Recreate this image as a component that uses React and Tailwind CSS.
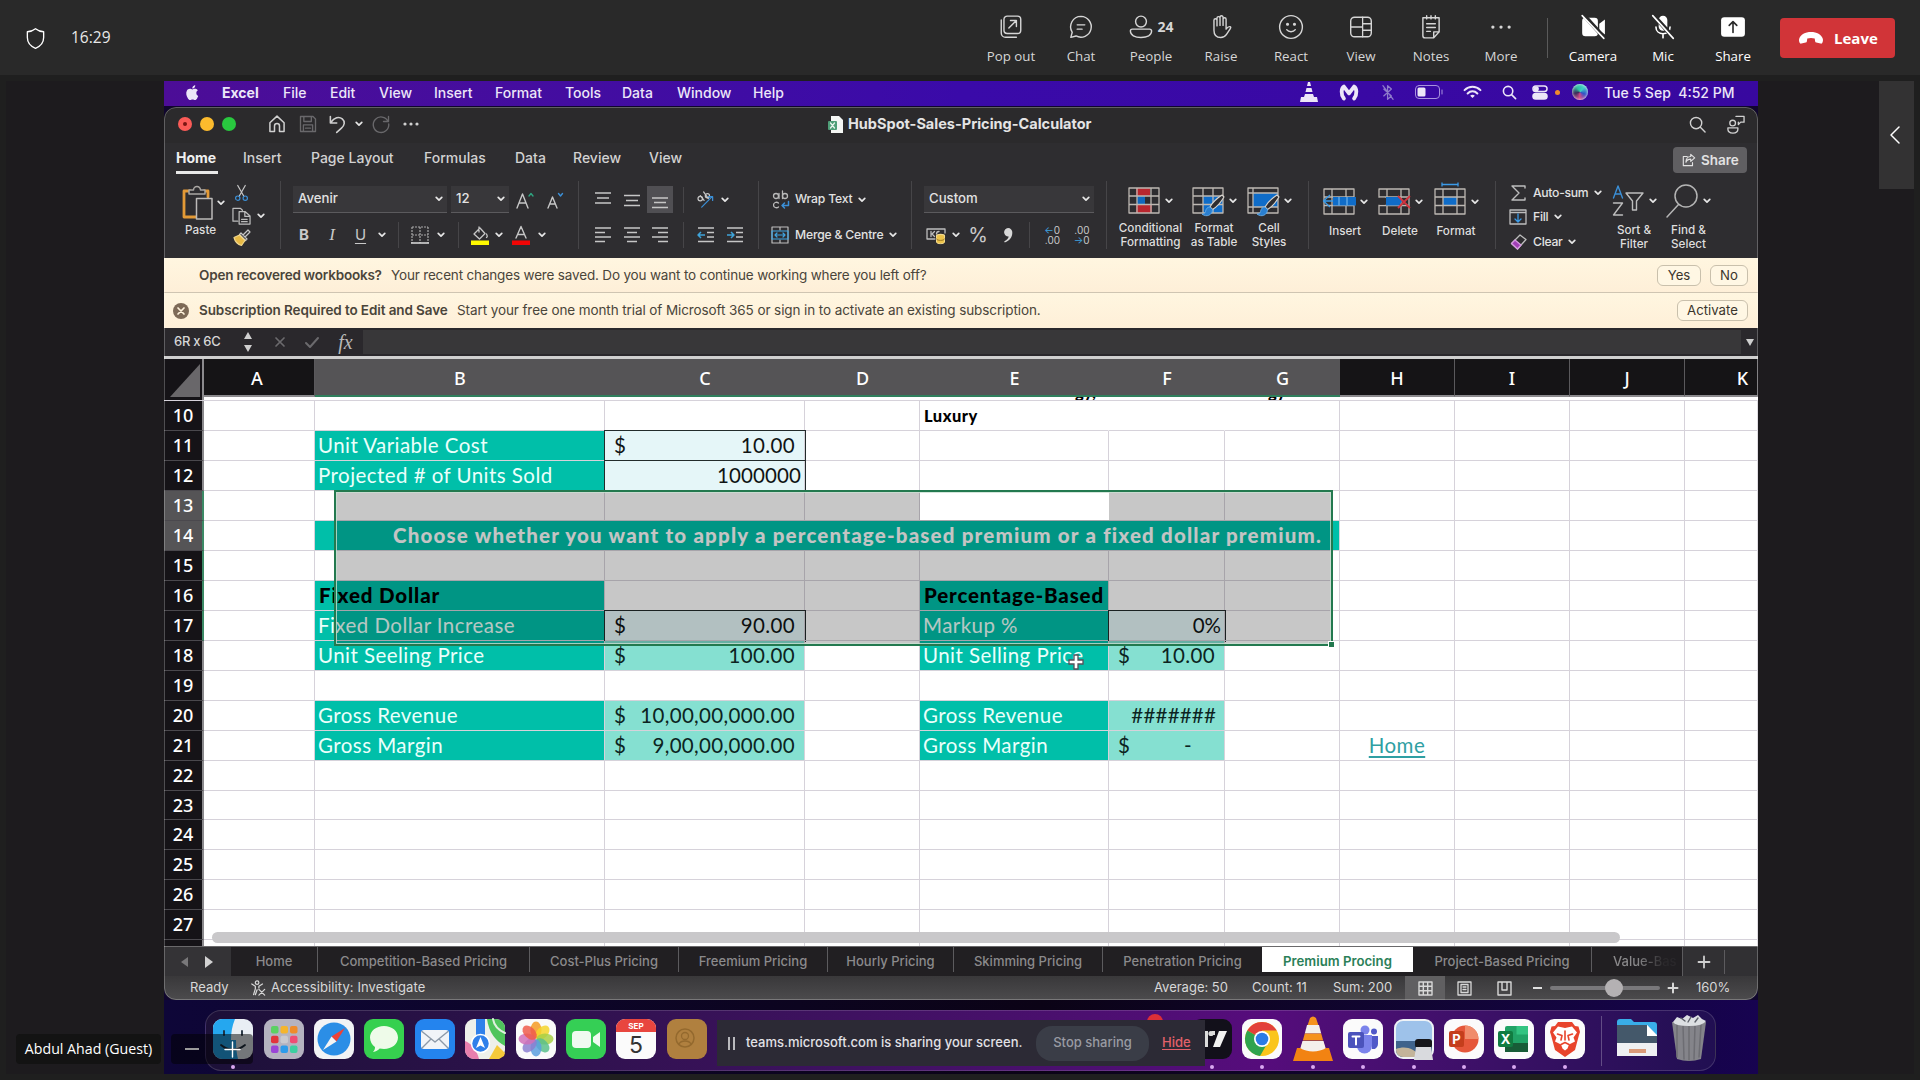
import React from "react";

/* ---------- small helpers ---------- */

function Svg({ className = "", vb = "0 0 24 24", children, ...rest }) {
  return (
    <svg
      className={"shrink-0 overflow-visible " + className}
      viewBox={vb}
      fill="none"
      stroke="currentColor"
      strokeWidth="1.5"
      strokeLinecap="round"
      strokeLinejoin="round"
      {...rest}
    >
      {children}
    </svg>
  );
}

function Caret({ className = "" }) {
  return (
    <Svg vb="0 0 8 6" className={"w-[8px] h-[6px] text-[#e6e6e6] " + className}>
      <path d="M1.2 1.4 4 4.2 6.8 1.4" strokeWidth="1.7" />
    </Svg>
  );
}

function Slot({ className = "", children }) {
  return <div className={"flex shrink-0 items-center justify-center " + className}>{children}</div>;
}

function Sep({ className = "w-[18px]" }) {
  return (
    <Slot className={className}>
      <div className="h-[26px] w-px bg-[#464548]" />
    </Slot>
  );
}

/* ---------- meeting toolbar ---------- */

const ic = "w-[26px] h-[26px]";

const meetingActions = [
  {
    label: "Pop out",
    icon: (
      <Svg className={ic} strokeWidth="1.3">
        <rect x="5.500" y="2" width="15.500" height="16" rx="3" />
        <path d="M3 5.500v12a4 4 0 0 0 4 4h10M10 13l6.500-6.500M11.500 6H17v5.500" />
      </Svg>
    ),
  },
  {
    label: "Chat",
    icon: (
      <Svg className={ic} strokeWidth="1.3">
        <path d="M12 2.2a9.6 9.6 0 1 1-4.6 18.1L2.6 21.6l1.3-4.7A9.6 9.6 0 0 1 12 2.2ZM8.5 10h7M8.5 14h4.5" />
      </Svg>
    ),
  },
  {
    label: "People",
    badge: "24",
    icon: (
      <Svg className={ic} strokeWidth="1.3">
        <circle cx="12" cy="7" r="5" />
        <path d="M4 14h16a1.800 1.800 0 0 1 1.800 1.800c0 3.700-4 5.900-9.800 5.900s-9.800-2.200-9.800-5.900A1.800 1.800 0 0 1 4 14Z" />
      </Svg>
    ),
  },
  {
    label: "Raise",
    icon: (
      <Svg className={ic} strokeWidth="1.3">
        <path d="M5.500 13V5.800a1.400 1.400 0 0 1 2.800 0V11 3.800a1.400 1.400 0 0 1 2.800 0V10.500 3a1.400 1.400 0 0 1 2.800 0v7.500V4.800a1.400 1.400 0 0 1 2.800 0V14c1-1.500 2-2.700 3.700-2.300.8.200.7 1 .2 1.700l-3.500 5.400c-1.200 1.800-2.800 2.900-5.300 2.900-4 0-6.300-2.600-6.300-6.700Z" />
      </Svg>
    ),
  },
  {
    label: "React",
    icon: (
      <Svg className={ic} strokeWidth="1.3">
        <circle cx="12" cy="12" r="10.500" />
        <path d="M8 14.500c1.900 2.600 6.100 2.600 8 0" />
        <circle cx="8.800" cy="9.500" r=".8" fill="currentColor" />
        <circle cx="15.200" cy="9.500" r=".8" fill="currentColor" />
      </Svg>
    ),
  },
  {
    label: "View",
    icon: (
      <Svg className={ic} strokeWidth="1.3">
        <rect x="2.500" y="3" width="19" height="18" rx="3.500" />
        <path d="M13.500 3v18M2.500 12h11M13.500 9h8M13.500 15h8" strokeWidth="1.200" />
      </Svg>
    ),
  },
  {
    label: "Notes",
    icon: (
      <Svg className={ic} strokeWidth="1.3">
        <path d="M4.500 3.500h15v13L14.500 22H6.500a2 2 0 0 1-2-2ZM14.500 22v-5.500h5M8 1.500v3M12 1.500v3M16 1.500v3M8 9h8M8 12.500h8M8 16h3.500" />
      </Svg>
    ),
  },
  {
    label: "More",
    icon: (
      <Svg className={ic} stroke="none" fill="currentColor">
        <circle cx="4.500" cy="12" r="1.500" />
        <circle cx="12" cy="12" r="1.500" />
        <circle cx="19.500" cy="12" r="1.500" />
      </Svg>
    ),
  },
];

const deviceActions = [
  {
    label: "Camera",
    icon: (
      <Svg className={ic}>
        <path d="M2 6.500A3 3 0 0 1 5 3.500h8.500a3 3 0 0 1 3 3v11a3 3 0 0 1-3 3H5a3 3 0 0 1-3-3ZM17.800 9 23 5v14l-5.200-4Z" fill="currentColor" stroke="none" />
        <path d="m3.500 1 19 21" stroke="#292929" strokeWidth="4" />
        <path d="m2 1.500 20 21" />
      </Svg>
    ),
  },
  {
    label: "Mic",
    icon: (
      <Svg className={ic}>
        <rect x="8" y="1.500" width="8" height="14" rx="4" fill="currentColor" stroke="none" />
        <path d="M5.500 12c0 4 3 6.200 6.500 6.200s6.500-2.200 6.500-6.200M12 18.500v3.500" />
        <path d="m3.500 1.500 18 20" stroke="#292929" strokeWidth="4" />
        <path d="m2.500 1.500 19 21" />
      </Svg>
    ),
  },
  {
    label: "Share",
    icon: (
      <Svg className={ic}>
        <rect x="1" y="3" width="22" height="18" rx="3" fill="currentColor" stroke="none" />
        <path d="M12 17V7.500M8.500 10.500 12 7l3.500 3.500" stroke="#292929" />
      </Svg>
    ),
  },
];

function Action({ item, bright }) {
  return (
    <div className={"flex w-[70px] shrink-0 flex-col items-center " + (bright ? "text-white" : "text-[#d6d6d6]")}>
      <div className="flex h-[30px] items-center justify-center">
        {item.icon}
        {item.badge && <span className="ml-[3px] text-[14px] leading-none font-bold">{item.badge}</span>}
      </div>
      <div className="mt-[5px] text-[13.300px] leading-[18px] whitespace-nowrap">{item.label}</div>
    </div>
  );
}

function MeetingBar() {
  return (
    <div className="flex h-[75px] shrink-0 items-start bg-[#292929] font-['Open_Sans','Noto_Sans',sans-serif]">
      <div className="flex h-[76px] w-[976px] items-center pl-[24px]">
        <Svg className="h-[23px] w-[23px] text-white" strokeWidth="1.400">
          <path d="M12 1.800c2.500 2 5 3 8.500 3.200V11c0 5.300-3 9-8.500 11.200C6.500 20 3.500 16.300 3.500 11V5C7 4.800 9.500 3.800 12 1.800Z" />
        </Svg>
        <span className="ml-[24px] text-[15.500px] text-[#e8e8e8]">16:29</span>
      </div>
      <div className="flex pt-[12px]">
        {meetingActions.map((a) => (
          <Action key={a.label} item={a} />
        ))}
      </div>
      <div className="mt-[18px] ml-[11px] h-[40px] w-px bg-[#5a5a5a]" />
      <div className="ml-[10px] flex pt-[12px]">
        {deviceActions.map((a) => (
          <Action key={a.label} item={a} bright />
        ))}
      </div>
      <button className="mt-[18px] ml-[12px] flex h-[40px] w-[115px] items-center rounded-[4px] bg-[#d13438] pl-[18px] text-white">
        <Svg vb="0 0 26 14" className="h-[14px] w-[26px]" stroke="none" fill="currentColor">
          <path d="M13 1c5.800 0 10.500 2.600 11.800 6.800.5 1.800-.1 3.500-.6 4.300-.4.500-1 .7-1.600.5l-4.300-1c-.7-.2-1.100-.7-1.200-1.400l-.4-2.700c-2.400-.8-5-.8-7.400 0l-.4 2.700c-.1.700-.5 1.200-1.200 1.400l-4.300 1c-.6.200-1.200 0-1.600-.5-.5-.8-1.100-2.500-.6-4.300C2.500 3.600 7.200 1 13 1Z" />
        </Svg>
        <span className="ml-[10px] text-[15px] font-bold">Leave</span>
      </button>
    </div>
  );
}

/* ---------- mac menu bar ---------- */

const menus = [
  ["Excel", "w-[61px] font-bold"],
  ["File", "w-[47px]"],
  ["Edit", "w-[49px]"],
  ["View", "w-[55px]"],
  ["Insert", "w-[61px]"],
  ["Format", "w-[70px]"],
  ["Tools", "w-[57px]"],
  ["Data", "w-[55px]"],
  ["Window", "w-[76px]"],
  ["Help", "w-[60px]"],
];

function MenuBar() {
  return (
    <div className="flex h-[25px] shrink-0 items-center bg-linear-to-r from-[#4c0d97] via-[#3a0aa9] to-[#38089f] pb-[3px] text-[14px] font-medium text-[#ece6f8]">
      <Svg vb="0 0 24 24" className="ml-[20px] h-[19px] w-[18px]" stroke="none" fill="currentColor">
        <path d="M16.400 12.800c0-2.500 2-3.700 2.100-3.800-1.200-1.700-3-1.900-3.600-2-1.500-.1-3 .9-3.800.9s-2-.9-3.200-.8c-1.700 0-3.200 1-4.100 2.400-1.700 3-.4 7.500 1.300 10 .8 1.200 1.800 2.500 3.100 2.500 1.300 0 1.700-.8 3.200-.8s1.900.8 3.200.8c1.400 0 2.200-1.200 3-2.400.900-1.400 1.300-2.700 1.300-2.800 0 0-2.500-1-2.500-4ZM14 5.400c.7-.8 1.100-2 1-3.100-1 0-2.200.7-2.900 1.500-.6.700-1.200 1.900-1 3 1.100.1 2.200-.6 2.900-1.400Z" />
      </Svg>
      <div className="ml-[20px] flex">
        {menus.map(([t, c]) => (
          <div key={t} className={"shrink-0 " + c}>
            {t}
          </div>
        ))}
      </div>
      <div className="ml-[476px] flex items-center">
        <Slot className="w-[40px]">
          <Svg vb="0 0 20 20" className="h-[20px] w-[20px]" stroke="none" fill="currentColor">
            <path d="M9 0h2l1 4H8ZM7.500 6h5l1 4h-7ZM6 12h8l1 3h3l1 5H1l1-5h3Z" />
          </Svg>
        </Slot>
        <Slot className="w-[40px]">
          <Svg vb="0 0 22 20" className="h-[17px] w-[20px]" strokeWidth="4.500">
            <path d="M5 17C1 12 2 5 5 3l6 8 6-8c3 2 4 9 0 14" />
          </Svg>
        </Slot>
        <Slot className="w-[38px] text-[#8f7ccb]">
          <Svg vb="0 0 14 20" className="h-[17px] w-[12px]">
            <path d="m2 6 9 8-4.500 4V2L11 6l-9 8M1 2l12 16" />
          </Svg>
        </Slot>
        <Slot className="w-[43px]">
          <Svg vb="0 0 28 14" className="h-[14px] w-[28px]" strokeWidth="1">
            <rect x=".5" y=".5" width="24" height="13" rx="3.500" stroke="#a893de" />
            <rect x="2.500" y="2.500" width="8" height="9" rx="1.500" fill="currentColor" stroke="none" />
            <path d="M27 5v4" stroke="#a893de" />
          </Svg>
        </Slot>
        <Slot className="w-[44px]">
          <Svg vb="0 0 20 15" className="h-[14px] w-[19px]" strokeWidth="2.200">
            <path d="M1.500 5.500c4.800-4.800 12.200-4.800 17 0M4.800 9c3-3 7.400-3 10.400 0" />
            <path d="m10 14-2.500-2.600c1.400-1.300 3.600-1.300 5 0Z" fill="currentColor" stroke="none" />
          </Svg>
        </Slot>
        <Slot className="w-[31px]">
          <Svg vb="0 0 16 16" className="h-[15px] w-[15px]" strokeWidth="1.700">
            <circle cx="6.500" cy="6.500" r="5" />
            <path d="m10.500 10.500 4 4" />
          </Svg>
        </Slot>
        <Slot className="w-[29px]">
          <Svg vb="0 0 17 16" className="h-[15px] w-[16px]" strokeWidth="1.600">
            <rect x="1" y="1" width="15" height="6" rx="3" />
            <circle cx="4.500" cy="4" r="2" fill="currentColor" />
            <rect x="1" y="9" width="15" height="6" rx="3" fill="currentColor" />
          </Svg>
        </Slot>
        <div className="ml-px h-[5px] w-[5px] rounded-full bg-[#f08a2c]" />
        <Slot className="w-[40px]">
          <div className="h-[16px] w-[16px] rounded-full bg-[conic-gradient(from_40deg,#3fd0c4,#3152c8,#d24a8a,#3a2a5a,#2fbfa0,#3fd0c4)] shadow-[inset_0_0_3px_#fff]" />
        </Slot>
        <span className="ml-[4px] whitespace-pre">Tue 5 Sep  4:52 PM</span>
      </div>
    </div>
  );
}

/* ---------- excel window chrome ---------- */

function TitleBar() {
  return (
    <div className="flex h-[36px] shrink-0 items-center bg-[#2b2a2c] pb-[2px] text-[#d0d0d0]">
      <div className="ml-[14px] flex gap-[8px]">
        <div className="flex h-[14px] w-[14px] items-center justify-center rounded-full bg-[#fb5b57]">
          <div className="h-[4px] w-[4px] rounded-full bg-[#7a1512]" />
        </div>
        <div className="h-[14px] w-[14px] rounded-full bg-[#fcbb2d]" />
        <div className="h-[14px] w-[14px] rounded-full bg-[#29c83f]" />
      </div>
      <Slot className="ml-[25px] w-[32px]">
        <Svg className="h-[20px] w-[20px]" strokeWidth="1.800">
          <path d="M3.500 10.500 12 2.500l8.500 8V21H15v-6.500a3 3 0 0 0-6 0V21H3.500Z" />
        </Svg>
      </Slot>
      <Slot className="w-[30px] text-[#69686b]">
        <Svg className="h-[20px] w-[20px]" strokeWidth="1.600">
          <path d="M3 3h15l3 3v15H3ZM7 3v6h9V3M6.500 21v-8h11v8M9 17h6" />
        </Svg>
      </Slot>
      <Slot className="w-[28px]">
        <Svg className="h-[19px] w-[19px]" strokeWidth="2">
          <path d="M3 2v8h8M3.500 9.500C8 3 14 1.500 18 5s3 8-1 11.500L11 22" />
        </Svg>
      </Slot>
      <Slot className="w-[15px]">
        <Caret />
      </Slot>
      <Slot className="w-[30px] text-[#69686b]">
        <Svg className="h-[20px] w-[20px]" strokeWidth="1.600">
          <path d="M20.500 9A9.300 9.300 0 1 0 21.300 12M21 3v6h-6" />
        </Svg>
      </Slot>
      <Slot className="w-[30px]">
        <Svg vb="0 0 16 4" className="h-[4px] w-[16px]" fill="currentColor" stroke="none">
          <circle cx="2" cy="2" r="1.600" />
          <circle cx="8" cy="2" r="1.600" />
          <circle cx="14" cy="2" r="1.600" />
        </Svg>
      </Slot>
      <div className="ml-[402px] flex w-[818px] items-center">
        <Svg vb="0 0 15 17" className="h-[17px] w-[15px]" stroke="none">
          <path d="M3 0h8l4 4v13H3Z" fill="#f4f6f4" />
          <rect y="5" width="9" height="9" rx="1" fill="#4f9e78" />
          <path d="m2.500 7 4 5M6.500 7l-4 5" stroke="#e6f2ea" strokeWidth="1.300" />
        </Svg>
        <span className="ml-[5px] text-[14.500px] font-bold text-[#e4e4e4]">HubSpot-Sales-Pricing-Calculator</span>
      </div>
      <Slot className="ml-[32px] w-[38px]">
        <Svg vb="0 0 18 18" className="h-[17px] w-[17px]">
          <circle cx="7.500" cy="7.500" r="6" />
          <path d="m12 12 5 5" />
        </Svg>
      </Slot>
      <Slot className="w-[38px]">
        <Svg vb="0 0 20 20" className="h-[19px] w-[19px]" strokeWidth="1.400">
          <circle cx="7" cy="8.500" r="3" />
          <path d="M2 13.500h10.500v1.500c0 2.500-2 4-5.200 4S2 17.500 2 15ZM10.500 1.500H19v6h-3.500L13 10V7.500" />
        </Svg>
      </Slot>
    </div>
  );
}

const ribbonTabs = [
  ["Insert", "w-[68px]"],
  ["Page Layout", "w-[113px]"],
  ["Formulas", "w-[91px]"],
  ["Data", "w-[58px]"],
  ["Review", "w-[76px]"],
  ["View", "w-[60px]"],
];

function RibbonTabs() {
  return (
    <div className="flex h-[37px] shrink-0 items-start bg-[#2e2d30] text-[14px] font-medium text-[#d2d2d2]">
      <div className="mt-[4px] ml-[12px] w-[67px]">
        <div className="w-[42px] border-b-[3px] border-[#e8e8e8] pb-[2px] leading-[22px] font-bold text-[#efefef]">Home</div>
      </div>
      <div className="mt-[4px] flex w-[1430px] leading-[22px]">
        {ribbonTabs.map(([t, c]) => (
          <div key={t} className={"shrink-0 " + c}>
            {t}
          </div>
        ))}
      </div>
      <div className="mt-[4px] flex h-[26px] w-[74px] shrink-0 items-center rounded-[4px] bg-[#605f62] pl-[9px] font-semibold text-[#e2e2e2]">
        <Svg vb="0 0 16 16" className="mr-[5px] h-[14px] w-[14px]" strokeWidth="1.300">
          <path d="M6 4H1.500v10.500H12V11M10 1.500l4.500 4-4.500 4V7C7 7 5.500 8 4.500 10.500 4.500 6.500 6.500 4 10 4Z" />
        </Svg>
        <span className="text-[13.500px]">Share</span>
      </div>
    </div>
  );
}

function Field({ className, children }) {
  return (
    <div className={"flex h-[27px] shrink-0 items-center justify-between border-b border-[#5b5a5d] bg-[#38373a] pr-[4px] pl-[5px] text-[13.200px] font-medium text-[#e2e2e2] " + className}>
      {children}
      <Caret />
    </div>
  );
}

function Lines({ d, className = "h-[18px] w-[18px]" }) {
  return (
    <Svg vb="0 0 18 18" className={className + " text-[#c6c6c6]"} strokeLinecap="butt">
      <path d={d} />
    </Svg>
  );
}

function TableIcon({ children }) {
  return (
    <Svg vb="0 0 32 28" className="h-[28px] w-[32px] text-[#bdb8b2]" strokeWidth="1.300" strokeLinecap="butt">
      {children}
    </Svg>
  );
}

const gridPath = "M1 1h30v25H1ZM1 9h30M1 17.500h30M9 1v25M23 1v25";

function BigButton({ className, icon, lines }) {
  return (
    <div className={"flex shrink-0 flex-col items-center " + className}>
      <div className="flex h-[38px] items-center gap-[5px]">
        {icon}
        <Caret />
      </div>
      <div className="mt-[3px] text-center text-[11.700px] leading-[14px] font-medium text-[#dedede]">
        {lines.map((l) => (
          <div key={l} className="whitespace-nowrap">
            {l}
          </div>
        ))}
      </div>
    </div>
  );
}

function Group({ className, children }) {
  return <div className={"flex h-[68px] shrink-0 border-r border-[#464548] " + className}>{children}</div>;
}

const brush = (
  <>
    <path d="M30 8c-6 4-10 8-12 12l2.500 2.500C25 20 29 15 32 10Z" fill="#2e2d30" stroke="#d8d4ce" strokeWidth="1.100" />
    <path d="M18 20c-3 0-4 2-4.500 4.500-.5 2-1.800 2.500-3.500 2.500 4 3.500 10.500 1.500 10.500-4.500Z" fill="#2a7fd0" stroke="#6ab2ee" strokeWidth=".8" />
  </>
);

function Ribbon() {
  return (
    <div className="flex h-[78px] shrink-0 items-start bg-[#2e2d30] pt-px">
      <Group className="w-[117px]">
        <div className="ml-[18px] w-[47px] pt-[5px]">
          <div className="flex items-center gap-[3px]">
            <Svg vb="0 0 32 34" className="h-[34px] w-[32px]" strokeWidth="1.500">
              <path d="M8 5H2v26h12M22 5h4v6" stroke="#e39a36" strokeWidth="2.800" />
              <path d="M7 8V4h4.500a3.500 3.500 0 0 1 7 0H23v4Z" stroke="#a9a6a3" fill="#2e2d30" />
              <path d="M14.500 12.500H30V33H14.500Z" stroke="#bcbab8" fill="#2e2d30" />
            </Svg>
            <Caret />
          </div>
          <div className="mt-[3px] ml-[3px] text-[11.700px] leading-[15px] font-medium text-[#dedede]">Paste</div>
        </div>
        <div className="flex flex-col">
          <div className="flex h-[26px] items-center pl-[5px]">
            <Svg vb="0 0 16 18" className="h-[18px] w-[15px]" strokeWidth="1.300">
              <path d="m4 1 6.500 11.500M12 1 5.500 12.500" stroke="#c6c6c6" />
              <circle cx="4" cy="14.500" r="2.300" stroke="#3b8fd6" />
              <circle cx="12" cy="14.500" r="2.300" stroke="#3b8fd6" />
            </Svg>
          </div>
          <div className="flex h-[23px] items-center gap-[6px] pl-[3px]">
            <Svg vb="0 0 20 18" className="h-[18px] w-[19px] text-[#bcbcbc]" strokeWidth="1.300">
              <path d="M6 14.500H1V1h8l2 2M7.500 4.500H14L19 9v8.500H7.500ZM13.500 4.500V9.500H19M10 12.500h6M10 15h6" />
            </Svg>
            <Caret />
          </div>
          <div className="flex h-[24px] items-center pl-[4px]">
            <Svg vb="0 0 18 17" className="h-[17px] w-[18px]" strokeWidth="1.200">
              <path d="m10 6 5-5 2 2-5 5M8 4l6 6-1.500 1.500-6-6Z" stroke="#c6c6c6" />
              <path d="M6.500 6 1 8.500c1 4 4 7 7.500 8l3.500-5Z" fill="#e7b945" stroke="#f0d68c" />
            </Svg>
          </div>
        </div>
      </Group>

      <Group className="w-[298px] flex-col">
        <div className="mt-[5px] flex items-center">
          <Field className="ml-[12px] w-[154px]">Avenir</Field>
          <Field className="ml-[4px] w-[58px]">12</Field>
          <Slot className="w-[31px]">
            <Svg vb="0 0 20 18" className="h-[18px] w-[20px] text-[#c6c6c6]" strokeWidth="1.400">
              <path d="M2 17 7.500 3 13 17M4 12h7" />
              <path d="m14 5 2-2.500L18 5" stroke="#2fa37f" />
            </Svg>
          </Slot>
          <Slot className="w-[29px]">
            <Svg vb="0 0 18 18" className="h-[18px] w-[18px] text-[#c6c6c6]" strokeWidth="1.400">
              <path d="M2 17 6.500 6 11 17M4 13h5" />
              <path d="m12.500 2.500 2 2.500 2-2.500" stroke="#3b8fd6" />
            </Svg>
          </Slot>
        </div>
        <div className="mt-[9px] flex h-[26px] items-center pl-[9px] text-[15px] text-[#c9c9c9]">
          <Slot className="w-[28px] font-bold">B</Slot>
          <Slot className="w-[28px] font-['Liberation_Serif',serif] text-[17px] italic">I</Slot>
          <Slot className="w-[29px] underline underline-offset-[3px]">U</Slot>
          <Slot className="w-[14px]">
            <Caret />
          </Slot>
          <Sep />
          <Slot className="w-[26px]">
            <Svg vb="0 0 18 18" className="h-[18px] w-[18px] text-[#a9a9a9]" strokeWidth="1.200" strokeLinecap="butt">
              <path d="M1 1h16M1 1v16M17 1v16M9 1v16M1 9h16" strokeDasharray="2 1" />
              <path d="M0 17h18" stroke="#dedede" strokeWidth="1.500" />
            </Svg>
          </Slot>
          <Slot className="w-[16px]">
            <Caret />
          </Slot>
          <Sep />
          <Slot className="w-[25px]">
            <Svg vb="0 0 18 19" className="h-[19px] w-[18px] text-[#c6c6c6]" strokeWidth="1.300">
              <path d="m3 8 6-6 5 5.500L8.500 13ZM8 1v5M15.500 8c1 2 1 3 0 3.500" />
              <path d="M0 14.500h18V19H0Z" fill="#fdf800" stroke="none" />
            </Svg>
          </Slot>
          <Slot className="w-[13px]">
            <Caret />
          </Slot>
          <Slot className="w-[32px]">
            <Svg vb="0 0 18 19" className="h-[19px] w-[18px] text-[#c6c6c6]" strokeWidth="1.400">
              <path d="M4 12 9 0.500 14 12M5.500 8.500h7" />
              <path d="M0 14.500h18V19H0Z" fill="#f20505" stroke="none" />
            </Svg>
          </Slot>
          <Slot className="w-[10px]">
            <Caret />
          </Slot>
        </div>
      </Group>

      <Group className="w-[180px] flex-col">
        <div className="mt-[5px] flex h-[27px] items-center pl-[9px]">
          <Slot className="w-[29px]">
            <Lines d="M1 2h16M3 7h12M1 12h16" />
          </Slot>
          <Slot className="w-[29px]">
            <Lines d="M1 4.500h16M3 9.500h12M1 14.500h16" />
          </Slot>
          <Slot className="w-[28px]">
            <Slot className="h-[27px] w-[26px] bg-[#504f53]">
              <Lines d="M1 7h16M3 11.500h12M1 16.500h16" />
            </Slot>
          </Slot>
          <Sep />
          <Slot className="w-[26px]">
            <Svg vb="0 0 20 20" className="h-[19px] w-[19px] text-[#c6c6c6]" strokeWidth="1.300">
              <circle cx="4.500" cy="9" r="2.400" />
              <path d="m4.500 6 4 5M8 2l5 7" />
              <circle cx="12" cy="6" r="2.200" />
              <path d="m6 18 11-11M13 7h4.500v4" stroke="#3b8fd6" />
            </Svg>
          </Slot>
          <Slot className="w-[14px]">
            <Caret />
          </Slot>
        </div>
        <div className="mt-[9px] flex h-[26px] items-center pl-[9px]">
          <Slot className="w-[29px]">
            <Lines d="M1 2h16M1 6.500h10M1 11h16M1 15.500h10" />
          </Slot>
          <Slot className="w-[29px]">
            <Lines d="M1 2h16M4 6.500h10M1 11h16M4 15.500h10" />
          </Slot>
          <Slot className="w-[28px]">
            <Lines d="M1 2h16M7 6.500h10M1 11h16M7 15.500h10" />
          </Slot>
          <Sep />
          <Slot className="w-[28px]">
            <Svg vb="0 0 18 18" className="h-[18px] w-[18px] text-[#c6c6c6]" strokeLinecap="butt">
              <path d="M1 2h16M10 6.500h7M10 11h7M1 15.500h16" />
              <path d="M1 9h7M4 6 1 9l3 3" stroke="#3fa3d8" />
            </Svg>
          </Slot>
          <Slot className="w-[29px]">
            <Svg vb="0 0 18 18" className="h-[18px] w-[18px] text-[#c6c6c6]" strokeLinecap="butt">
              <path d="M1 2h16M10 6.500h7M10 11h7M1 15.500h16" />
              <path d="M1 9h7M5 6l3 3-3 3" stroke="#3fa3d8" />
            </Svg>
          </Slot>
        </div>
      </Group>

      <Group className="w-[153px] flex-col text-[12.200px] font-medium text-[#e2e2e2]">
        <div className="mt-[5px] flex h-[27px] items-center pl-[13px]">
          <Svg vb="0 0 18 20" className="mr-[5px] h-[20px] w-[18px] text-[#b9b9b9]" strokeWidth="1.300">
            <circle cx="4" cy="6" r="2.500" />
            <path d="M7 3.500v5M10.500 1v7.500" />
            <circle cx="13" cy="6" r="2.500" />
            <path d="M6.500 13c-2-1.500-5-.5-5 2s3 3.500 5 2" />
            <path d="M16.500 11.500v4H10M12.500 13 10 15.500l2.500 2.500" stroke="#3b8fd6" strokeWidth="1.500" />
          </Svg>
          <span className="mr-[6px] tracking-[-0.200px] whitespace-nowrap">Wrap Text</span>
          <Caret />
        </div>
        <div className="mt-[9px] flex h-[26px] items-center pl-[12px]">
          <Svg vb="0 0 18 18" className="mr-[6px] h-[18px] w-[18px] text-[#bdbdbd]" strokeWidth="1.200">
            <path d="M1 1h16v16H1ZM9 1v3M9 14v3" />
            <path d="M1 5h16v8H1ZM4 9h10M6 7 4 9l2 2M12 7l2 2-2 2" stroke="#3fa3e0" />
          </Svg>
          <span className="mr-[6px] tracking-[-0.200px] whitespace-nowrap">Merge &amp; Centre</span>
          <Caret />
        </div>
      </Group>

      <Group className="w-[195px] flex-col">
        <Field className="mt-[5px] ml-[12px] w-[170px]">Custom</Field>
        <div className="mt-[9px] flex h-[26px] items-center pl-[12px] text-[#c9c9c9]">
          <Slot className="w-[24px]">
            <Svg vb="0 0 20 18" className="h-[18px] w-[20px] text-[#bdbdbd]" strokeWidth="1.300">
              <path d="M9 13H1V3h18v4M5 5.500v5M8.500 5.500 6 8l2.500 2.500M13 5.500c-2 0-2.500 1-2.500 2.500" />
              <ellipse cx="14.500" cy="10" rx="4" ry="1.700" fill="#edc34a" stroke="#f2d98d" />
              <path d="M10.500 10v6c0 2.200 8 2.200 8 0v-6" fill="#edc34a" stroke="#f2d98d" strokeWidth="1" />
              <path d="M10.500 13c0 2 8 2 8 0" stroke="#8a6a18" strokeWidth=".8" />
            </Svg>
          </Slot>
          <Slot className="w-[15px]">
            <Caret />
          </Slot>
          <Slot className="w-[30px] text-[20px]">%</Slot>
          <Slot className="w-[29px]">
            <Svg vb="0 0 10 16" className="h-[15px] w-[10px]" stroke="none" fill="#d8d8d8">
              <path d="M5 0a4.600 4.600 0 0 1 4.600 5C9.600 9.500 7 13.500 1.500 15.500l-.5-1.300c3-1.500 4.500-3.300 4.700-5.200A4.500 4.500 0 1 1 5 0Z" />
            </Svg>
          </Slot>
          <Sep className="w-[14px]" />
          <Slot className="w-[29px]">
            <div className="w-[19px] text-right text-[10px] leading-[10px]">
              <div>
                <span className="text-[#3fa3e0]">←</span>0
              </div>
              <div>.00</div>
            </div>
          </Slot>
          <Slot className="w-[30px]">
            <div className="w-[19px] text-right text-[10px] leading-[10px]">
              <div>.00</div>
              <div>
                <span className="text-[#3fa3e0]">→</span>0
              </div>
            </div>
          </Slot>
        </div>
      </Group>

      <Group className="w-[202px] pt-[2px] pl-[10px]">
        <BigButton
          className="w-[67px]"
          lines={["Conditional", "Formatting"]}
          icon={
            <TableIcon>
              <path d="M8 1h14v8H8ZM8 17.500h16V26H8Z" fill="#b8262e" stroke="none" />
              <path d="M9 9h8v8.500H9Z" fill="#1168bd" stroke="none" />
              <path d={gridPath} />
            </TableIcon>
          }
        />
        <BigButton
          className="w-[60px]"
          lines={["Format", "as Table"]}
          icon={
            <TableIcon>
              <path d="M11 9h20v17H11Z" fill="#0f6cc8" stroke="none" />
              <path d="M1 1h30v25H1ZM1 9h30M1 17.500h30M11 1v25M21 1v25" />
              {brush}
            </TableIcon>
          }
        />
        <BigButton
          className="w-[50px]"
          lines={["Cell", "Styles"]}
          icon={
            <TableIcon>
              <path d="M6 6h25v14H6Z" fill="#0f6cc8" stroke="none" />
              <path d="M1 1h30v25H1ZM1 6h30M6 1v25M1 20h30" />
              {brush}
            </TableIcon>
          }
        />
      </Group>

      <Group className="w-[187px] pt-[2px] pl-[9px]">
        <BigButton
          className="w-[54px]"
          lines={["Insert"]}
          icon={
            <TableIcon>
              <path d={gridPath} />
              <path d="M10 9h23v8.500H10Z" fill="#0f6cc8" stroke="none" />
              <path d="M16 9v8.500M24 9v8.500" stroke="#66aee8" />
              <path d="M10 13H1M7 7l-6.500 6L7 19" stroke="#3b9be8" />
            </TableIcon>
          }
        />
        <BigButton
          className="w-[56px]"
          lines={["Delete"]}
          icon={
            <TableIcon>
              <path d={gridPath} />
              <path d="M8 9h13l3 4-3 4.500H8Z" fill="#0f6cc8" stroke="none" />
              <path d="M0 9.700h7v7H0Z" fill="#2e2d30" stroke="none" />
              <path d="m20 8 12 12M32 8 20 20" stroke="#d23540" strokeWidth="1.800" />
            </TableIcon>
          }
        />
        <BigButton
          className="w-[56px]"
          lines={["Format"]}
          icon={
            <TableIcon>
              <path d="M9 9h14v8.500H9Z" fill="#0f6cc8" stroke="none" />
              <path d={gridPath} />
              <path d="M8-3.500h16M8-5.500v4M24-5.500v4" stroke="#3b9be8" />
            </TableIcon>
          }
        />
      </Group>

      <div className="flex pt-px pl-[11px]">
        <div className="w-[100px] text-[12.200px] font-medium text-[#e2e2e2]">
          <div className="flex h-[22px] items-center">
            <Slot className="w-[22px]">
              <Svg vb="0 0 15 16" className="h-[16px] w-[15px] text-[#bdbdbd]" strokeWidth="1.400">
                <path d="M14 3V1H1l7 7-7 7h13v-2" />
              </Svg>
            </Slot>
            <span className="mr-[6px] ml-[4px] tracking-[-0.300px] whitespace-nowrap">Auto-sum</span>
            <Caret />
          </div>
          <div className="flex h-[26px] items-center">
            <Slot className="w-[22px]">
              <Svg vb="0 0 18 16" className="h-[16px] w-[18px] text-[#bdbdbd]" strokeWidth="1.300">
                <path d="M1 1h16v14H1ZM1 3.500h16" />
                <path d="M9 5v7.500M6 10l3 3 3-3" stroke="#3b9be8" />
              </Svg>
            </Slot>
            <span className="mr-[6px] ml-[4px] tracking-[-0.300px]">Fill</span>
            <Caret />
          </div>
          <div className="flex h-[24px] items-center">
            <Slot className="w-[22px]">
              <Svg vb="0 0 17 16" className="h-[16px] w-[17px]" strokeWidth="1.300">
                <path d="M1.500 9.500 10 1l6 4.500L7.500 15Z" stroke="#bdbdbd" />
                <path d="M1.500 9.500 5 6l6 5-3.500 4Z" fill="#a33fb8" stroke="#d69be0" />
              </Svg>
            </Slot>
            <span className="mr-[6px] ml-[4px] tracking-[-0.300px]">Clear</span>
            <Caret />
          </div>
        </div>
        <BigButton
          className="w-[54px]"
          lines={["Sort &", "Filter"]}
          icon={
            <Svg vb="0 0 32 32" className="h-[32px] w-[32px] text-[#bdbdbd]" strokeWidth="1.400">
              <path d="M1.500 13 6 1l4.500 12M3 9h6" stroke="#3b8fd6" />
              <path d="M1.500 18h9l-9 12h9M14 8h17l-6.500 8v9h-4v-9Z" />
            </Svg>
          }
        />
        <BigButton
          className="w-[55px]"
          lines={["Find &", "Select"]}
          icon={
            <Svg vb="0 0 32 34" className="h-[34px] w-[32px] text-[#b4b4b4]" strokeWidth="1.500">
              <circle cx="20" cy="12" r="11" />
              <path d="M12.500 20.500 1 33" />
            </Svg>
          }
        />
      </div>
    </div>
  );
}

/* ---------- notices and formula bar ---------- */

function NoticeButton({ className, children }) {
  return (
    <div className={"flex h-[21px] shrink-0 items-center justify-center rounded-[6px] border border-[#c9c0ac] bg-[#fff7e4] text-[13.200px] text-[#3a352c] " + className}>
      {children}
    </div>
  );
}

function Notices() {
  return (
    <div className="shrink-0 text-[13.500px] text-[#4a453a]">
      <div className="flex h-[35px] items-center border-b border-[#cfc5b2] bg-linear-to-b from-[#fff6e0] to-[#feefd8] pt-px pl-[35px]">
        <span className="w-[192px] shrink-0 font-semibold tracking-[-0.200px] whitespace-nowrap">Open recovered workbooks?</span>
        <span className="w-[1266px] shrink-0 tracking-[-0.170px] whitespace-nowrap">Your recent changes were saved. Do you want to continue working where you left off?</span>
        <NoticeButton className="w-[44px]">Yes</NoticeButton>
        <NoticeButton className="ml-[9px] w-[38px]">No</NoticeButton>
      </div>
      <div className="flex h-[35px] items-center bg-linear-to-b from-[#fff6e0] to-[#feefd8] pl-[9px]">
        <Svg vb="0 0 16 16" className="mr-[10px] h-[16px] w-[16px]" stroke="none">
          <circle cx="8" cy="8" r="8" fill="#7d6a57" />
          <path d="m5 5 6 6M11 5l-6 6" stroke="#fff3dc" strokeWidth="1.700" />
        </Svg>
        <span className="w-[258px] shrink-0 font-semibold tracking-[-0.100px] whitespace-nowrap">Subscription Required to Edit and Save</span>
        <span className="w-[1220px] shrink-0 tracking-[-0.095px] whitespace-nowrap">Start your free one month trial of Microsoft 365 or sign in to activate an existing subscription.</span>
        <NoticeButton className="w-[71px]">Activate</NoticeButton>
      </div>
    </div>
  );
}

function FormulaBar() {
  return (
    <div className="flex h-[28px] shrink-0 items-center bg-[#2a282c] text-[#d6d6d6]">
      <span className="w-[80px] shrink-0 pl-[10px] text-[13px] font-medium tracking-[-0.300px]">6R x 6C</span>
      <Svg vb="0 0 8 20" className="h-[20px] w-[8px]" stroke="none" fill="#cfcfcf">
        <path d="m4 0 4 7H0ZM4 20l4-7H0Z" />
      </Svg>
      <Slot className="ml-[12px] w-[32px] text-[#6b6a6d]">
        <Svg vb="0 0 10 10" className="h-[10px] w-[10px]" strokeWidth="1.700">
          <path d="m1 1 8 8M9 1 1 9" />
        </Svg>
      </Slot>
      <Slot className="w-[32px] text-[#6b6a6d]">
        <Svg vb="0 0 14 11" className="h-[11px] w-[14px]" strokeWidth="2">
          <path d="m1 6 4 4 8-9" />
        </Svg>
      </Slot>
      <Slot className="w-[35px] font-['Liberation_Serif',serif] text-[20px] text-[#b8b8b8] italic">fx</Slot>
      <div className="h-[24px] w-[1378px] shrink-0 bg-[#383739]" />
      <Slot className="w-[17px]">
        <Svg vb="0 0 8 7" className="h-[7px] w-[8px]" stroke="none" fill="#cfcfcf">
          <path d="m4 7 4-7H0Z" />
        </Svg>
      </Slot>
    </div>
  );
}

/* ---------- sheet ---------- */

const cols = [
  ["A", "w-[111px]"],
  ["B", "w-[290px]", true],
  ["C", "w-[200px]", true],
  ["D", "w-[115px]", true],
  ["E", "w-[189px]", true],
  ["F", "w-[116px]", true],
  ["G", "w-[115px]", true],
  ["H", "w-[115px]"],
  ["I", "w-[115px]"],
  ["J", "w-[115px]"],
  ["K", "w-[73px]"],
];

const TEAL = "bg-[#00bfa9] border-[#00bfa9] text-[#eafffb] pl-[3px] tracking-[0.450px]";
const TEALB = "bg-[#00bfa9] border-[#00bfa9] text-black font-black pl-[4px] tracking-[0.850px]";
const LIGHT = "bg-[#85e0d1] border-[#85e0d1] text-[#0c2421]";
const INPUT = "bg-[#e5f6f8] text-[#101414] outline outline-1 outline-[#222b2b] -outline-offset-0";

function Money({ v, className = "pr-[9px]" }) {
  return (
    <div className={"flex flex-1 justify-between pl-[9px] tracking-[0.350px] " + className}>
      <span>$</span>
      <span className="whitespace-nowrap">{v}</span>
    </div>
  );
}

const right = (v, c) => <div className={"flex-1 text-right whitespace-nowrap " + c}>{v}</div>;

const sheet = {
  10: { E: ["border-r-transparent! pl-[4px] pt-[2px] font-black text-[16.500px] tracking-[0.500px] text-black", "Luxury"], F: ["border-r-transparent!", ""] },
  11: { B: [TEAL, "Unit Variable Cost"], C: [INPUT, <Money v="10.00" />] },
  12: { B: [TEAL, "Projected # of Units Sold"], C: [INPUT, right("1000000", "pr-[3px] tracking-[0.100px]")] },
  16: { B: [TEALB, "Fixed Dollar"], E: [TEALB, "Percentage-Based"] },
  17: {
    B: [TEAL, "Fixed Dollar Increase"],
    C: [INPUT, <Money v="90.00" />],
    E: [TEAL, "Markup %"],
    F: [INPUT, right("0%", "pr-[3px]")],
  },
  18: {
    B: [TEAL, "Unit Seeling Price"],
    C: [LIGHT, <Money v="100.00" />],
    E: [TEAL, "Unit Selling Price"],
    F: [LIGHT, <Money v="10.00" />],
  },
  20: {
    B: [TEAL, "Gross Revenue"],
    C: [LIGHT, <Money v="10,00,00,000.00" />],
    E: [TEAL, "Gross Revenue"],
    F: [LIGHT, right("#######", "pr-[8px] tracking-[0.200px]")],
  },
  21: {
    B: [TEAL, "Gross Margin"],
    C: [LIGHT, <Money v="9,00,00,000.00" />],
    E: [TEAL, "Gross Margin"],
    F: [LIGHT, <Money v="-" className="pr-[32px]" />],
    H: ["justify-center text-[#2f9fa3] underline underline-offset-[3px] tracking-[0.450px]", "Home"],
  },
};

const rows = [10, 11, 12, 13, 14, 15, 16, 17, 18, 19, 20, 21, 22, 23, 24, 25, 26, 27];

function Cell({ w, cls = "", children }) {
  return <div className={"flex h-full shrink-0 items-center border-r border-b border-[#d6d2da] whitespace-nowrap " + w + " " + cls}>{children}</div>;
}

function RowHead({ n }) {
  const sel = n === 13 || n === 14;
  const edge = n >= 13 && n <= 17;
  return (
    <div
      className={
        "flex h-full w-[40px] shrink-0 items-center justify-center border-r-2 border-b border-b-[#4a484d] font-['Noto_Sans',sans-serif] text-[18px] font-medium text-white " +
        (sel ? "bg-[#555456] " : "bg-[#151317] ") +
        (edge ? "border-r-[#3c8a66]" : "border-r-[#8b8a8d]")
      }
    >
      {n}
    </div>
  );
}

function Sheet() {
  return (
    <div className="relative flex h-[590px] shrink-0 flex-col overflow-hidden border-t-[3px] border-[#cfcfcf] bg-white">
      <div className="flex h-[38px] shrink-0">
        <div className="flex w-[40px] shrink-0 border-r-2 border-[#8b8a8d] bg-[#151317]">
          <Svg vb="0 0 38 38" className="h-[38px] w-[38px]" stroke="none">
            <path d="M36 5v33H6Z" fill="#69676a" />
          </Svg>
        </div>
        {cols.map(([n, w, on]) => (
          <div
            key={n}
            className={
              "flex shrink-0 items-center justify-center pt-[3px] font-['Noto_Sans',sans-serif] text-[18px] font-medium text-white " +
              w +
              (on ? " border-b-2 border-[#2f7f5c] bg-[#555456]" : " border-r border-b-2 border-[#5a595c] border-b-[#8b8a8d] bg-[#151416]") +
              (n === "K" ? " pl-[43px]" : "") +
              (n === "A" ? " pr-[4px]" : "")
            }
          >
            {n}
          </div>
        ))}
      </div>

      <div className="flex h-[4px] shrink-0 overflow-hidden border-b border-[#d6d2da] font-['Lato',sans-serif] text-[16.500px] leading-[20px] font-black text-black">
        <div className="h-full w-[40px] shrink-0 border-r-2 border-[#8b8a8d] bg-[#151317]" />
        <div className="-mt-[15px] w-[871px] shrink-0" />
        <div className="-mt-[15px] w-[193px] shrink-0">gy,</div>
        <div className="-mt-[15px] shrink-0">gy</div>
      </div>

      <div className="flex flex-col font-['Lato',sans-serif] text-[20.500px] text-black">
        {rows.map((n) => (
          <div key={n} className={"flex shrink-0 " + (n === 23 ? "h-[29px]" : "h-[30px]")}>
            <RowHead n={n} />
            {n === 14 ? (
              <>
                <Cell w="w-[111px]" />
                <Cell w="w-[1025px]" cls="border-[#00bfa9] bg-[#00bfa9] pl-[78px] font-black tracking-[1.190px] text-[#fbfbfb]">
                  Choose whether you want to apply a percentage-based premium or a fixed dollar premium.
                </Cell>
                {cols.slice(7).map(([c, w]) => (
                  <Cell key={c} w={w} />
                ))}
              </>
            ) : (
              cols.map(([c, w]) => {
                const d = (sheet[n] || {})[c];
                return (
                  <Cell key={c} w={w} cls={d ? d[0] : ""}>
                    {d ? d[1] : null}
                  </Cell>
                );
              })
            )}
          </div>
        ))}
        <div className="flex h-[6px] shrink-0">
          <div className="w-[40px] shrink-0 border-r-2 border-[#8b8a8d] bg-[#151317]" />
          {cols.map(([c, w]) => (
            <Cell key={c} w={w} cls="border-b-0" />
          ))}
        </div>
      </div>

      {/* selection over B13:G18 with the active cell left clear */}
      <div className="absolute top-[131px] left-[170px] flex h-[156px] w-[999px] flex-col border-2 border-[#23794f]">
        <div className="flex h-[28px] shrink-0">
          <div className="w-[584px] bg-black/22" />
          <div className="w-[189px] bg-white" />
          <div className="flex-1 bg-black/22" />
        </div>
        <div className="flex-1 bg-black/22" />
        <div className="absolute inset-0 border border-[#c9e0d2]/80" />
        <div className="absolute -right-[4px] -bottom-[4px] h-[7px] w-[7px] border border-white bg-[#23794f]" />
      </div>

      {/* cross-shaped pointer */}
      <Svg vb="0 0 16 16" className="absolute top-[295px] left-[904px] h-[16px] w-[16px]" strokeLinejoin="miter">
        <path d="M6 1h4v5h5v4h-5v5H6v-5H1V6h5Z" fill="#fff" stroke="#55505a" strokeWidth="1.300" />
      </Svg>

      {/* horizontal scroll thumb */}
      <div className="absolute bottom-[3px] left-[48px] h-[11px] w-[1408px] rounded-full bg-[#c9c8ca]" />
    </div>
  );
}

/* ---------- sheet tabs and status ---------- */

const tabsLeft = [
  ["Home", "w-[87px]"],
  ["Competition-Based Pricing", "w-[212px]"],
  ["Cost-Plus Pricing", "w-[149px]"],
  ["Freemium Pricing", "w-[149px]"],
  ["Hourly Pricing", "w-[126px]"],
  ["Skimming Pricing", "w-[149px]"],
];

function SheetTabs() {
  return (
    <div className="flex h-[30px] shrink-0 items-start border-t border-[#6a696b] bg-[#211f22] text-[13px] font-medium text-[#8b8a8c]">
      <div className="flex h-full w-[67px] shrink-0 items-center justify-center gap-[17px] bg-[#343336] pr-[2px]">
        <Svg vb="0 0 7 10" className="h-[10px] w-[7px]" stroke="none" fill="#79787a">
          <path d="M7 0v10L0 5Z" />
        </Svg>
        <Svg vb="0 0 8 12" className="h-[12px] w-[8px]" stroke="none" fill="#d2d2d2">
          <path d="M0 0v12l8-6Z" />
        </Svg>
      </div>
      {tabsLeft.map(([t, w]) => (
        <div key={t} className={"flex h-[25px] shrink-0 items-center justify-center border-r border-[#5c5b5e] pt-[4px] whitespace-nowrap " + w}>
          {t}
        </div>
      ))}
      <div className="flex h-[25px] w-[159px] shrink-0 items-center justify-center pt-[4px] whitespace-nowrap">Penetration Pricing</div>
      <div className="flex h-[25px] w-[151px] shrink-0 items-center justify-center bg-white pt-[4px] text-[13.200px] font-semibold whitespace-nowrap text-[#2b8058]">Premium Procing</div>
      <div className="flex h-[25px] w-[179px] shrink-0 items-center justify-center border-r border-[#5c5b5e] pt-[4px] whitespace-nowrap">Project-Based Pricing</div>
      <div className="h-[25px] w-[90px] shrink-0 overflow-hidden bg-linear-to-r from-[#8b8a8c] from-50% to-[#2a282b] to-80% bg-clip-text pt-[5px] pl-[21px] whitespace-nowrap text-transparent">Value-Bas</div>
      <div className="flex h-full flex-1 items-center border-l border-[#5c5b5e] bg-[#313033]">
        <Slot className="h-[24px] w-[42px] border-r border-[#5c5b5e]">
          <Svg vb="0 0 12 12" className="h-[12px] w-[12px] text-[#cfcfcf]" strokeWidth="1.800">
            <path d="M6 .5v11M.5 6h11" />
          </Svg>
        </Slot>
      </div>
    </div>
  );
}

function StatusBar() {
  return (
    <div className="flex h-[24px] shrink-0 items-center bg-linear-to-b from-[#39383a] to-[#4c4b4d] text-[13px] text-[#d8d8d8]">
      <span className="w-[86px] shrink-0 pl-[26px]">Ready</span>
      <Svg vb="0 0 18 18" className="h-[16px] w-[16px]" strokeWidth="1.400">
        <circle cx="8" cy="3" r="2" />
        <path d="M2 4.500 6 7v3L4 16.500M14 4.500 10 7v2M8 11l-2 5.500M10 10.500l6.500 6.500M16.500 10.500 10 17" />
      </Svg>
      <span className="ml-[5px] w-[883px] shrink-0 tracking-[0.100px]">Accessibility: Investigate</span>
      <span className="w-[98px] shrink-0 whitespace-nowrap">Average: 50</span>
      <span className="w-[81px] shrink-0 whitespace-nowrap">Count: 11</span>
      <span className="w-[72px] shrink-0 whitespace-nowrap">Sum: 200</span>
      <Slot className="h-full w-[40px] bg-[#605f61]">
        <Svg vb="0 0 15 15" className="h-[15px] w-[15px]" strokeWidth="1.400">
          <path d="M1 1h13v13H1ZM1 5.300h13M1 9.700h13M5.300 1v13M9.700 1v13" />
        </Svg>
      </Slot>
      <Slot className="w-[39px]">
        <Svg vb="0 0 15 15" className="h-[15px] w-[15px]" strokeWidth="1.300">
          <path d="M1 1h13v13H1ZM4 3.500h7v8H4ZM6 6h3M6 8.500h3" />
        </Svg>
      </Slot>
      <Slot className="w-[40px]">
        <Svg vb="0 0 15 15" className="h-[15px] w-[15px]" strokeWidth="1.400">
          <path d="M1 1h13v13H1ZM5 1v8h5V1" />
        </Svg>
      </Slot>
      <div className="ml-[9px] h-[2px] w-[9px] shrink-0 bg-[#e0e0e0]" />
      <div className="relative ml-[8px] h-[4px] w-[110px] shrink-0 rounded-full bg-[#79787b]">
        <div className="absolute -top-[7px] left-[55px] h-[18px] w-[18px] rounded-full bg-[#b4b1b3]" />
      </div>
      <Svg vb="0 0 10 10" className="ml-[8px] h-[10px] w-[10px]" strokeWidth="2">
        <path d="M5 .5v9M.5 5h9" />
      </Svg>
      <span className="ml-[18px]">160%</span>
    </div>
  );
}

/* ---------- dock ---------- */

function DockIcon({ children, dot = false, className = "w-[50.400px]" }) {
  return (
    <div className={"relative flex shrink-0 justify-center pt-[8px] " + className}>
      <Svg vb="0 0 40 40" className="h-[40px] w-[40px]" stroke="none">
        {children}
      </Svg>
      {dot && <div className="absolute bottom-[1px] h-[4px] w-[4px] rounded-full bg-[#d9a8f0]" />}
    </div>
  );
}

const Tile = ({ fill }) => <rect width="40" height="40" rx="9" fill={fill} />;

const padColors = ["#5bd163", "#f5b52e", "#ef8c2b", "#e2343d", "#c9c9cf", "#ef4d74", "#9a45d6", "#2e9bea", "#3ccfa0"];
const petals = ["#f59a23", "#f4d52c", "#a8cf45", "#5bbf8b", "#5aa0de", "#8b7fd0", "#d070b8", "#ee5a4b"];

function Dock() {
  return (
    <div className="relative flex h-[74px] shrink-0 bg-linear-to-r from-[#0e0638] via-[#0b0316] via-55% to-[#170350]">
      <div className="mt-[10px] ml-[41px] flex h-[61px] w-[1511px] rounded-[16px] border border-white/15 bg-linear-to-r from-[#1c1038] via-[#560c7c] via-70% to-[#210f52] pl-[2px]">
        <DockIcon dot>
          <Tile fill="#e9eef4" />
          <path d="M9 0h13c-3 7-4 14-4 21h5c0 7 .5 13 2 19H9a9 9 0 0 1-9-9V9a9 9 0 0 1 9-9Z" fill="#25a7ef" />
          <path d="M11 12v4M29 12v4M8 26c7 6 17 6 24 0" stroke="#1b2a3a" strokeWidth="1.800" />
        </DockIcon>
        <DockIcon>
          <Tile fill="#b5b3c0" />
          {padColors.map((c, i) => (
            <rect key={c} x={7 + (i % 3) * 9.5} y={7 + Math.floor(i / 3) * 9.8} width="7.500" height="7.500" rx="2" fill={c} />
          ))}
        </DockIcon>
        <DockIcon>
          <Tile fill="#f2f3f5" />
          <circle cx="20" cy="20" r="16.500" fill="#2b8ee6" />
          <path d="m31 9-8.500 13.500-5-5Z" fill="#ef4136" />
          <path d="m9 31 8.500-13.500 5 5Z" fill="#f4f4f4" />
        </DockIcon>
        <DockIcon>
          <Tile fill="#36d04f" />
          <path d="M20 7c8 0 14 5 14 11.500S28 30 20 30c-1.500 0-3-.2-4.300-.5C14 31.500 12 32.500 9 33c1.500-1.500 2-3 2-5C8 25.800 6 22.500 6 18.500 6 12 12 7 20 7Z" fill="#eefbe9" />
        </DockIcon>
        <DockIcon>
          <Tile fill="#2484ee" />
          <rect x="6" y="11" width="28" height="19" rx="3" fill="#f1f4f8" />
          <path d="m7 12.500 13 10.500 13-10.500M7 29l9-9M33 29l-9-9" stroke="#8c99a8" strokeWidth="1.400" />
        </DockIcon>
        <DockIcon>
          <Tile fill="#eef0ea" />
          <path d="M22 0h9a9 9 0 0 1 9 9v18C31 22 24 14 22 0Z" fill="#4fc45c" />
          <path d="M28 0c1 6 5 11 12 14" stroke="#dff0df" strokeWidth="2" />
          <path d="M0 22c6 2 12 9 14 18H9a9 9 0 0 1-9-9Z" fill="#e87fae" />
          <path d="m24 40 8-14 8 8-1 3-5 3Z" fill="#f5c93a" />
          <path d="M11 0h9v18h-9Z" fill="#2f80ea" />
          <circle cx="15.500" cy="24.500" r="9" fill="#2f80ea" stroke="#fff" strokeWidth="1.500" />
          <path d="m15.500 18 4.500 11-4.500-2.500L11 29Z" fill="#fff" />
        </DockIcon>
        <DockIcon>
          <Tile fill="#fafafa" />
          {petals.map((c, i) => (
            <ellipse key={c} cx="20" cy="11" rx="5.500" ry="8.500" fill={c} fillOpacity=".85" transform={"rotate(" + i * 45 + " 20 20)"} />
          ))}
        </DockIcon>
        <DockIcon>
          <Tile fill="#35cf55" />
          <rect x="6" y="12" width="19" height="17" rx="4" fill="#effaf0" />
          <path d="m27 18 7-5v15l-7-5Z" fill="#effaf0" />
        </DockIcon>
        <DockIcon>
          <Tile fill="#fbfbfb" />
          <path d="M9 0h22a9 9 0 0 1 9 9v4H0V9a9 9 0 0 1 9-9Z" fill="#e8463f" />
          <text x="20" y="10" textAnchor="middle" fontSize="8" fontWeight="700" fill="#fff" fontFamily="Inter, sans-serif">SEP</text>
          <text x="20" y="34" textAnchor="middle" fontSize="23" fill="#333" fontFamily="Inter, sans-serif">5</text>
        </DockIcon>
        <DockIcon>
          <Tile fill="#b0803f" />
          <circle cx="18" cy="19" r="9" stroke="#94692e" strokeWidth="1.500" />
          <circle cx="18" cy="17" r="3.500" stroke="#94692e" strokeWidth="1.300" />
          <path d="M12 25c2-4 10-4 12 0" stroke="#94692e" strokeWidth="1.300" />
        </DockIcon>
        <div className="w-[475px] shrink-0" />
        <DockIcon dot>
          <Tile fill="#12101a" />
          <path d="M10 12h6v16h-6ZM20 12h3v4h-3Z" fill="#dcdcdc" />
          <circle cx="19" cy="14.500" r="2.600" fill="#dcdcdc" />
          <path d="M27 12h8l-7 16h-7Z" fill="#f2f2f2" />
        </DockIcon>
        <DockIcon dot>
          <Tile fill="#fbfbfb" />
          <circle cx="20" cy="20" r="17" fill="#fac51c" />
          <path d="M20 20 5.300 11.500A17 17 0 0 1 34.700 11.500H20Z" fill="#e2403a" />
          <path d="M20 20 5.300 11.500A17 17 0 0 0 18 37l7-12Z" fill="#2fa34e" />
          <circle cx="20" cy="20" r="8" fill="#fff" />
          <circle cx="20" cy="20" r="6.300" fill="#2c7be5" />
        </DockIcon>
        <DockIcon dot>
          <path d="M17-1q3-3 6 0l3 9H14ZM10 22h20l3 9H7Z" fill="#f5921e" />
          <path d="M14 6h12l2.200 8.500H11.800Z" fill="#f4f0ec" />
          <path d="M11.800 14.500h16.400l2 7H9.800Z" fill="#f5921e" />
          <path d="M9.500 22h21l2.500 8.500c-7 3.500-19 3.500-26 0Z" fill="#f4f0ec" />
          <path d="M4 29h3c7 4.500 19 4.500 26 0h3l4 13H0Z" fill="#f28312" />
        </DockIcon>
        <DockIcon dot>
          <Tile fill="#fbfbfb" />
          <circle cx="22" cy="11" r="4.500" fill="#7b83eb" />
          <circle cx="31" cy="12.500" r="3" fill="#5059c9" />
          <path d="M14 16h15v11a7.500 7.500 0 0 1-15 0Z" fill="#7b83eb" />
          <path d="M29 17h6v8a5 5 0 0 1-6 5Z" fill="#5059c9" />
          <rect x="5" y="13" width="16" height="16" rx="2" fill="#4b53bc" />
          <path d="M9.500 17.500h7M13 17.500v8" stroke="#fff" strokeWidth="2" />
        </DockIcon>
        <DockIcon dot>
          <Tile fill="#eef2f6" />
          <rect x="2" y="2" width="36" height="36" rx="7" fill="#9ec2ea" />
          <path d="M2 22h36v9a7 7 0 0 1-7 7H9a7 7 0 0 1-7-7Z" fill="#3f638c" />
          <path d="M2 30c8-3 18-2 24 8H9a7 7 0 0 1-7-7Z" fill="#c3b49a" />
          <rect x="21" y="20" width="17" height="9" rx="3" fill="#17171b" />
          <path d="M22 28h15l2 13H20Z" fill="#d9dade" />
        </DockIcon>
        <DockIcon dot>
          <Tile fill="#fbfbfb" />
          <circle cx="21" cy="20" r="13.500" fill="#e5573a" />
          <path d="M21 6.500A13.500 13.500 0 0 1 34.500 20H21Z" fill="#f08c6c" />
          <rect x="5" y="12" width="15" height="16" rx="2" fill="#c43e1c" />
          <text x="12.500" y="25" textAnchor="middle" fontSize="13" fontWeight="700" fill="#fff" fontFamily="Inter, sans-serif">P</text>
        </DockIcon>
        <DockIcon dot>
          <Tile fill="#fbfbfb" />
          <rect x="11" y="7" width="23" height="26" rx="2" fill="#21a366" />
          <path d="M22.500 7H34v8.500H22.500Z" fill="#33c481" />
          <path d="M11 24h23v9H11Z" fill="#185c37" />
          <rect x="4" y="12" width="15" height="16" rx="2" fill="#107c41" />
          <text x="11.500" y="25" textAnchor="middle" fontSize="13" fontWeight="700" fill="#fff" fontFamily="Inter, sans-serif">X</text>
        </DockIcon>
        <DockIcon dot>
          <Tile fill="#fbfbfb" />
          <path d="m13 3 14 0 3 4 3.500.5L35 13l-1 3-4 15-10 7-10-7-4-15-1-3 1.500-5.500L10 7Z" fill="#e8442c" />
          <path d="m20 9 7-1.500 5 6-3.500 5 1.500 4-6 3-1.500 4-2.500 2-2.500-2-1.500-4-6-3 1.500-4-3.500-5 5-6Z" fill="#fff" />
          <path d="m12.500 15 4.500 1.500-1 4.500M27.500 15 23 16.500l1 4.500M16 25.500l4-2 4 2M20 12v9" stroke="#e8442c" strokeWidth="1.600" />
        </DockIcon>
        <Slot className="w-[22px]">
          <div className="h-[50px] w-px bg-white/25" />
        </Slot>
        <DockIcon className="w-[50px]">
          <path d="M0 3q0-3 3-3h11l3 3h20q3 0 3 3v14H0Z" fill="#39ade8" />
          <path d="M0 6h30l10 10v21H0Z" fill="#eef0f2" />
          <path d="M0 6h30v11h10v7H0Z" fill="#44586a" />
          <path d="m30 6 10 11H30Z" fill="#fff" />
          <rect x="12" y="30" width="17" height="4" fill="#d99a78" />
        </DockIcon>
        <DockIcon className="w-[53px]">
          <path d="M3 3h34l-5 37q-12 4-24 0Z" fill="#84848a" />
          <path d="M8 6v32M14 6l1 34M20 6v35M26 6l-1 34M32 6l-2 32" stroke="#6d6d73" strokeWidth="1.500" />
          <path d="m4 3 4-5 5 2 5-4 6 3 5-3 4 4 4 2q-3 5-17 5T4 3Z" fill="#dcdfe2" />
          <path d="m12-1 4 3M22-2l-3 5M29-1l-3 4" stroke="#5c6068" strokeWidth="1.400" />
        </DockIcon>
      </div>

      {/* notification badge peeking out from behind the sharing bar */}
      <div className="absolute top-[14px] left-[983px] h-[16px] w-[16px] rounded-full bg-[#dc2f38]" />
      <div className="absolute top-[20px] left-[553px] flex h-[46px] w-[488px] items-center bg-[#2c2a35] text-[13px] font-medium text-[#e2e1e6]">
        <div className="ml-[11px] flex gap-[3px]">
          <div className="h-[13px] w-[2px] bg-[#b9b9bd]" />
          <div className="h-[13px] w-[2px] bg-[#b9b9bd]" />
        </div>
        <span className="ml-[11px] w-[290px] shrink-0 whitespace-nowrap">teams.microsoft.com is sharing your screen.</span>
        <div className="flex h-[35px] w-[113px] shrink-0 items-center justify-center rounded-[16px] bg-[#3a3d47] text-[#999ba3]">Stop sharing</div>
        <span className="ml-[13px] text-[#e2616a] underline underline-offset-2">Hide</span>
      </div>
    </div>
  );
}

/* ---------- page ---------- */

export default function App() {
  return (
    <div className="relative flex h-[1080px] w-[1920px] flex-col overflow-hidden bg-[#1f1f1f]">
      <MeetingBar />
      <div className="mt-[6px] ml-[6px] flex h-[993px] w-[1908px] bg-[#1d1b1e]">
        <div className="ml-[158px] flex w-[1594px] shrink-0 flex-col overflow-hidden bg-[#10062e] font-['Inter',sans-serif]">
          <MenuBar />
          <div className="relative mt-px flex h-[893px] shrink-0 flex-col overflow-hidden rounded-[12px]">
            <TitleBar />
            <RibbonTabs />
            <Ribbon />
            <Notices />
            <FormulaBar />
            <Sheet />
            <SheetTabs />
            <StatusBar />
            <div className="pointer-events-none absolute inset-0 rounded-[12px] border border-white/25" />
          </div>
          <Dock />
        </div>
        <div className="ml-[121px] flex h-[108px] w-[35px] shrink-0 items-center justify-center bg-[#333233] pr-[4px] text-white">
          <Svg vb="0 0 10 18" className="h-[18px] w-[10px]">
            <path d="M9 1 1 9l8 8" />
          </Svg>
        </div>
      </div>

      {/* presenter label and zoom buttons float over the shared screen */}
      <div className="absolute bottom-[16px] left-[16px] flex items-center gap-[10px] font-['Open_Sans','Noto_Sans',sans-serif] text-white">
        <div className="flex h-[30px] w-[145px] items-center justify-center rounded-[4px] bg-[#131313] text-[14.200px] whitespace-nowrap">Abdul Ahad (Guest)</div>
        <div className="flex h-[30px] w-[82px] items-center rounded-[4px] bg-black/50">
          <Slot className="w-[42px]">
            <div className="h-[1.500px] w-[14px] bg-[#9a9a9a]" />
          </Slot>
          <Slot className="w-[38px]">
            <Svg vb="0 0 16 16" className="h-[15px] w-[15px]" strokeWidth="1.500">
              <path d="M8 0v16M0 8h16" />
            </Svg>
          </Slot>
        </div>
      </div>
    </div>
  );
}
